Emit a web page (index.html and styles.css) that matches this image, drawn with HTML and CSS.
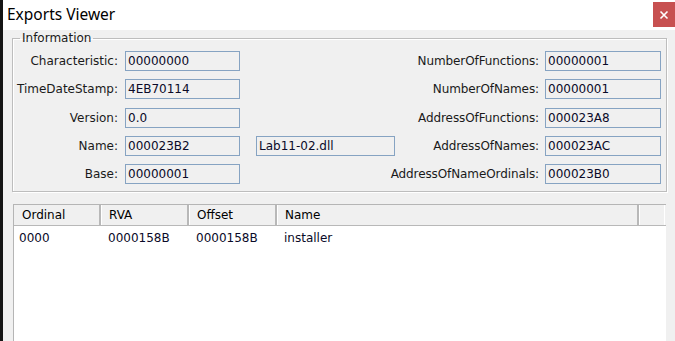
FILE: index.html
```html
<!DOCTYPE html>
<html>
<head>
<meta charset="utf-8">
<link rel="stylesheet" href="styles.css">
</head>
<body>
<div class="screen">
  <div class="edge"></div>
  <div class="window">
    <div class="titlebar">
      <span class="title">Exports Viewer</span>
      <div class="close">
        <svg width="10" height="10" viewBox="0 0 10 10"><path d="M1.5 1.5 L8.5 8.5 M8.5 1.5 L1.5 8.5" stroke="#fff" stroke-width="1.6"/></svg>
      </div>
    </div>
    <div class="body">
      <fieldset class="group">
        <legend>Information</legend>
        <div class="grid">
          <label class="lbl">Characteristic:</label>
          <div class="box">00000000</div>
          <div></div>
          <label class="lbl r">NumberOfFunctions:</label>
          <div class="box">00000001</div>

          <label class="lbl">TimeDateStamp:</label>
          <div class="box">4EB70114</div>
          <div></div>
          <label class="lbl r">NumberOfNames:</label>
          <div class="box">00000001</div>

          <label class="lbl">Version:</label>
          <div class="box">0.0</div>
          <div></div>
          <label class="lbl r">AddressOfFunctions:</label>
          <div class="box">000023A8</div>

          <label class="lbl">Name:</label>
          <div class="box">000023B2</div>
          <div class="box mid">Lab11-02.dll</div>
          <label class="lbl r">AddressOfNames:</label>
          <div class="box">000023AC</div>

          <label class="lbl">Base:</label>
          <div class="box">00000001</div>
          <div></div>
          <label class="lbl r">AddressOfNameOrdinals:</label>
          <div class="box">000023B0</div>
        </div>
      </fieldset>
      <div class="list">
        <div class="row head">
          <div class="c c1">Ordinal</div>
          <div class="c c2">RVA</div>
          <div class="c c3">Offset</div>
          <div class="c c4">Name</div>
          <div class="c c5"></div>
        </div>
        <div class="row item">
          <div class="c c1">0000</div>
          <div class="c c2">0000158B</div>
          <div class="c c3">0000158B</div>
          <div class="c c4">installer</div>
        </div>
      </div>
    </div>
  </div>
</div>
</body>
</html>
```
FILE: styles.css
```css
html, body {
  margin: 0;
  padding: 0;
  width: 675px;
  height: 341px;
  overflow: hidden;
  background: #f0f0f0;
}
.screen {
  display: flex;
  width: 675px;
  height: 341px;
  overflow: hidden;
}
.edge {
  width: 3px;
  flex: none;
  background: #141414;
}
.window {
  flex: 1;
  display: flex;
  flex-direction: column;
  background: #f0f0f0;
  font-family: "DejaVu Sans", Tahoma, sans-serif;
  font-size: 12px;
  color: #000;
}
.titlebar {
  height: 30px;
  flex: none;
  background: #fff;
  display: flex;
  justify-content: space-between;
  align-items: flex-start;
}
.title {
  font-family: "Noto Sans", "Open Sans", sans-serif;
  font-size: 15.5px;
  line-height: 28px;
  margin-left: 4px;
  color: #000;
}
.close {
  width: 22px;
  height: 25px;
  margin-top: 2px;
  background: #c75050;
  display: flex;
  align-items: center;
  justify-content: center;
}
.body {
  padding: 1px 8px 0 9px;
  display: flex;
  flex-direction: column;
}
.group {
  margin: 0;
  padding: 6px 4px 7px 0;
  border: 1px solid #bdbdbd;
  box-shadow: inset 1px 1px 0 #fff, 1px 1px 0 #fff;
}
.group legend {
  font-size: 12px;
  line-height: 14px;
  padding: 0 2px;
  margin-left: 7px;
  color: #1a1a1a;
}
.grid {
  display: grid;
  grid-template-columns: 112px 115px 155px 150px 116px;
  grid-template-rows: repeat(5, 20px);
  row-gap: 8.25px;
  column-gap: 0;
}
.lbl {
  display: flex;
  justify-content: flex-end;
  line-height: 20px;
  padding-right: 7px;
  white-space: nowrap;
  color: #1a1a1a;
  min-width: 0;
}
.lbl.r {
  padding-right: 6px;
  letter-spacing: -0.1px;
}
.box {
  box-sizing: border-box;
  height: 20px;
  border: 1px solid #86a3c2;
  padding-left: 2px;
  line-height: 18px;
  white-space: nowrap;
  color: #0a0a28;
}
.box.mid {
  margin-left: 16px;
}
.list {
  margin-top: 12px;
  margin-left: 1px;
  margin-right: 1px;
  height: 200px;
  flex: none;
  background: #fff;
  border-left: 1px solid #b5b5b5;
  border-top: 1px solid #b5b5b5;
}
.row {
  display: flex;
}
.head {
  height: 20px;
  background: #f0f0f0;
  border-bottom: 1px solid #b8b8b8;
}
.head .c {
  font-size: 12px;
  line-height: 20px;
  padding-left: 8px;
  box-sizing: border-box;
  border-right: 2px solid #b8b8b8;
  box-shadow: 1px 0 0 #fff;
}
.head .c5 {
  width: 25px;
  padding: 0;
  border-right: none;
}
.c1 { width: 87px; }
.c2 { width: 88px; }
.c3 { width: 88px; }
.c4 { width: 362px; }
.item .c {
  font-size: 12px;
  line-height: 17px;
  padding-top: 4px;
  padding-left: 5px;
  box-sizing: border-box;
  color: #0a0a28;
}
.item .c2, .item .c3, .item .c4 {
  padding-left: 7px;
}
```
